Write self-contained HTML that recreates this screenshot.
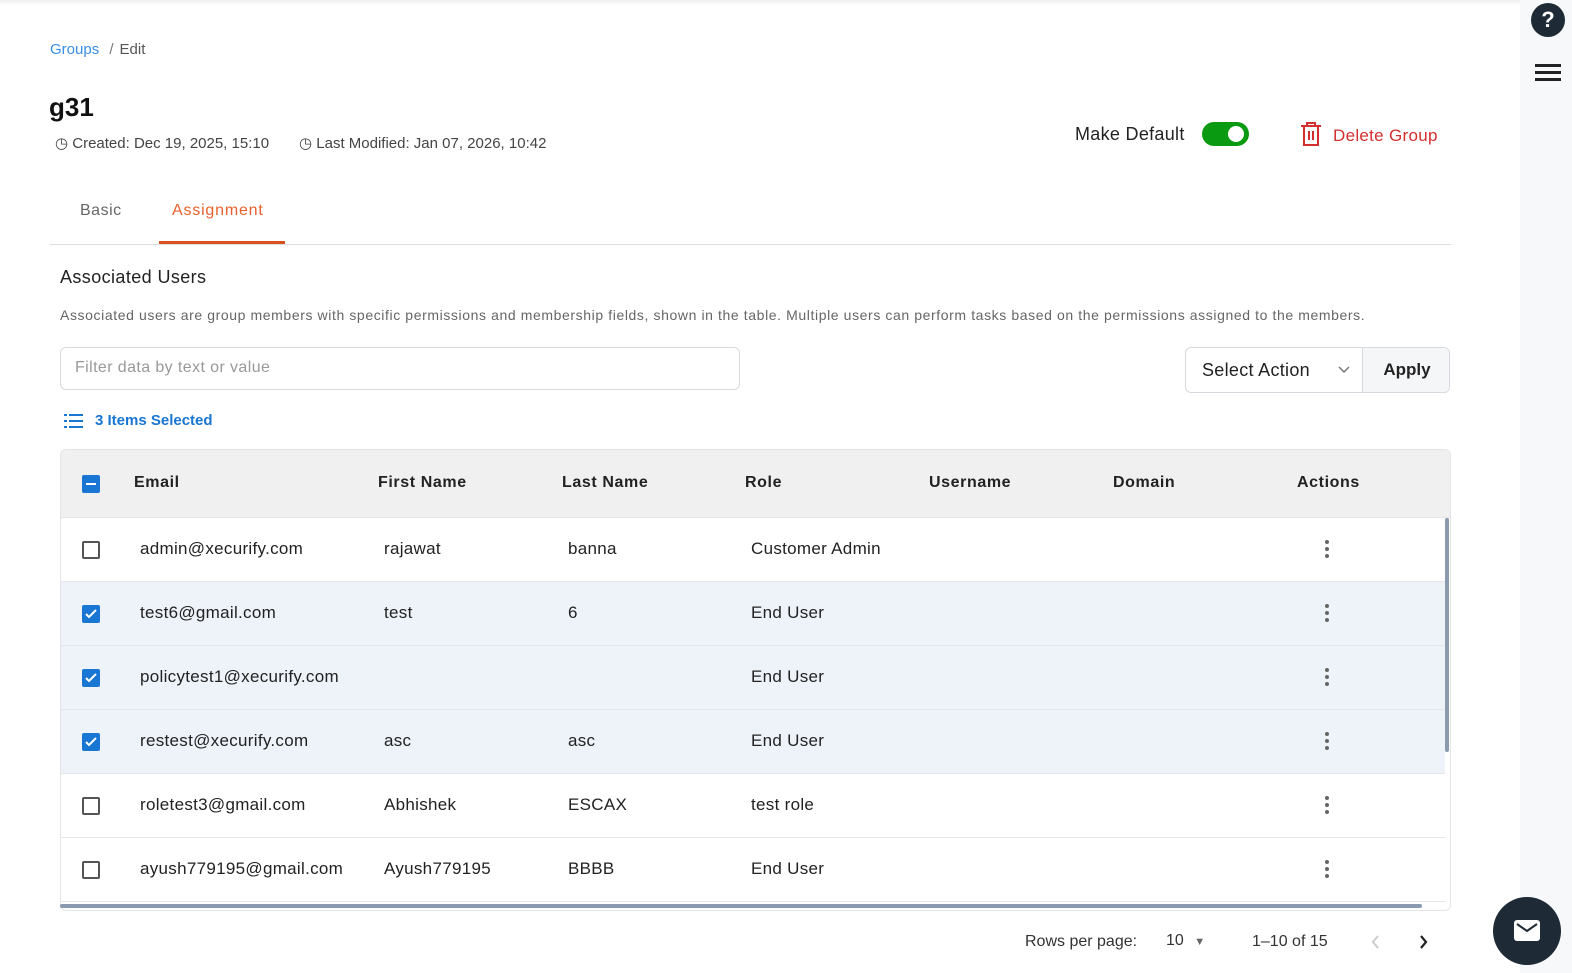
<!DOCTYPE html>
<html><head><meta charset="utf-8"><style>
*{box-sizing:border-box;margin:0;padding:0}
body{width:1572px;height:973px;overflow:hidden;background:#fff;font-family:"Liberation Sans",sans-serif;color:#222;position:relative}
.a{position:absolute;white-space:nowrap}
.side{position:absolute;left:1520px;top:0;width:52px;height:973px;background:#f7f8fa}
.row{position:absolute;left:61px;width:1384px;height:64px;border-bottom:1px solid #e4e6ea}
.sel{background:#edf3f9}
.cb{position:absolute;left:21px;top:23px;width:18px;height:18px;border:2px solid #555;border-radius:2px;background:#fff}
.cb.on{background:#1976d2;border-color:#1976d2}
.cell{position:absolute;top:21px;font-size:17px;letter-spacing:0.3px;color:#222}
.dots{position:absolute;left:1264px;top:22px;width:4px}
.dots i{display:block;width:4px;height:4px;border-radius:2px;background:#666;margin-bottom:3px}
.th{position:absolute;top:24px;font-size:16px;font-weight:bold;letter-spacing:0.6px;color:#222}
</style></head><body>
<div class="a" style="left:0;top:0;width:1520px;height:6px;background:linear-gradient(#f0f0f0,#fff)"></div>
<div class="side"></div>
<div class="a" style="left:1531px;top:3px;width:34px;height:34px;border-radius:17px;background:#1e2a35;color:#fff;font-weight:bold;font-size:22px;text-align:center;line-height:34px">?</div>
<div class="a" style="left:1535px;top:64px;width:26px;height:3px;background:#222"></div>
<div class="a" style="left:1535px;top:71px;width:26px;height:3px;background:#222"></div>
<div class="a" style="left:1535px;top:78px;width:26px;height:3px;background:#222"></div>

<div class="a" style="left:50px;top:41px;font-size:15px;color:#3a8ee6">Groups <span style="color:#777;margin:0 6px">/</span><span style="color:#555">Edit</span></div>
<div class="a" style="left:49px;top:92px;font-size:26px;font-weight:bold;color:#111">g31</div>
<div class="a" style="left:55px;top:134px;font-size:15px;color:#444">◷ Created: Dec 19, 2025, 15:10</div>
<div class="a" style="left:299px;top:134px;font-size:15px;color:#444">◷ Last Modified: Jan 07, 2026, 10:42</div>

<div class="a" style="left:1075px;top:124px;font-size:18px;letter-spacing:0.3px;color:#222">Make Default</div>
<div class="a" style="left:1202px;top:122px;width:47px;height:24px;border-radius:12px;background:#0a9a12"><div style="position:absolute;left:26px;top:4px;width:16px;height:16px;border-radius:8px;background:#fff"></div></div>
<svg class="a" style="left:1300px;top:122px" width="22" height="24" viewBox="0 0 22 24" fill="none" stroke="#d32f2f" stroke-width="2"><path d="M1 4h20M7 4V1h8v3M4 4v19h14V4M9 9v9M13 9v9"/></svg>
<div class="a" style="left:1333px;top:126px;font-size:17px;letter-spacing:0.3px;color:#d32f2f">Delete Group</div>

<div class="a" style="left:80px;top:202px;font-size:16px;letter-spacing:0.5px;color:#666">Basic</div>
<div class="a" style="left:172px;top:202px;font-size:16px;letter-spacing:0.8px;color:#e8612c">Assignment</div>
<div class="a" style="left:50px;top:244px;width:1401px;height:1px;background:#ddd"></div>
<div class="a" style="left:159px;top:241px;width:126px;height:3px;background:#d9531e"></div>

<div class="a" style="left:60px;top:267px;font-size:18px;letter-spacing:0.4px;color:#222">Associated Users</div>
<div class="a" style="left:60px;top:307px;font-size:14px;letter-spacing:0.6px;color:#666">Associated users are group members with specific permissions and membership fields, shown in the table. Multiple users can perform tasks based on the permissions assigned to the members.</div>

<div class="a" style="left:60px;top:347px;width:680px;height:43px;border:1px solid #d6d9de;border-radius:6px;padding:11px 14px;font-size:16px;letter-spacing:0.4px;color:#999">Filter data by text or value</div>
<div class="a" style="left:1185px;top:347px;width:265px;height:46px;border:1px solid #d6d9de;border-radius:6px;overflow:hidden">
<div style="position:absolute;left:0;top:0;width:176px;height:44px;padding:12px 16px;font-size:18px;letter-spacing:0.3px;color:#222">Select Action <svg style="position:absolute;left:152px;top:18px" width="12" height="8" viewBox="0 0 12 8"><path d="M1 1l5 5 5-5" stroke="#777" stroke-width="1.5" fill="none"/></svg></div>
<div style="position:absolute;left:176px;top:0;width:89px;height:44px;background:#f5f6f8;border-left:1px solid #d6d9de;text-align:center;line-height:44px;font-size:17px;font-weight:bold">Apply</div></div>

<svg class="a" style="left:64px;top:413px" width="20" height="16" viewBox="0 0 20 16" fill="#1976d2"><rect x="0" y="1" width="3" height="2"/><rect x="5" y="1" width="14" height="2"/><rect x="0" y="7" width="3" height="2"/><rect x="5" y="7" width="14" height="2"/><rect x="0" y="13" width="3" height="2"/><rect x="5" y="13" width="14" height="2"/></svg>
<div class="a" style="left:95px;top:412px;font-size:15px;font-weight:bold;color:#1976d2">3 Items Selected</div>

<div class="a" style="left:60px;top:449px;width:1391px;height:462px;border:1px solid #e2e4e8;border-radius:6px;overflow:hidden">
<div style="position:absolute;left:0;top:0;width:1391px;height:68px;background:#f0f0f0;border-bottom:1px solid #e2e4e8">
<div class="cb on" style="top:25px;left:21px"><div style="position:absolute;left:2px;top:6px;width:10px;height:2px;background:#fff"></div></div>
<div class="th" style="left:73px">Email</div><div class="th" style="left:317px">First Name</div><div class="th" style="left:501px">Last Name</div><div class="th" style="left:684px">Role</div><div class="th" style="left:868px">Username</div><div class="th" style="left:1052px">Domain</div><div class="th" style="left:1236px">Actions</div>
</div>
</div>
<div class="a" style="left:1445px;top:518px;width:4px;height:234px;background:#8a9bb0;border-radius:2px"></div>
<div class="a" style="left:60px;top:904px;width:1362px;height:4px;background:#8a9bb0;border-radius:2px"></div>

<div class="row" style="top:518px"><div class="cb"></div><div class="cell" style="left:79px">admin@xecurify.com</div><div class="cell" style="left:323px">rajawat</div><div class="cell" style="left:507px">banna</div><div class="cell" style="left:690px">Customer Admin</div><div class="dots"><i></i><i></i><i></i></div></div>
<div class="row sel" style="top:582px"><div class="cb on"><svg width="14" height="14" viewBox="0 0 14 14" style="position:absolute;left:0;top:0"><path d="M2 7l3 3 7-7" stroke="#fff" stroke-width="2" fill="none"/></svg></div><div class="cell" style="left:79px">test6@gmail.com</div><div class="cell" style="left:323px">test</div><div class="cell" style="left:507px">6</div><div class="cell" style="left:690px">End User</div><div class="dots"><i></i><i></i><i></i></div></div>
<div class="row sel" style="top:646px"><div class="cb on"><svg width="14" height="14" viewBox="0 0 14 14" style="position:absolute;left:0;top:0"><path d="M2 7l3 3 7-7" stroke="#fff" stroke-width="2" fill="none"/></svg></div><div class="cell" style="left:79px">policytest1@xecurify.com</div><div class="cell" style="left:690px">End User</div><div class="dots"><i></i><i></i><i></i></div></div>
<div class="row sel" style="top:710px"><div class="cb on"><svg width="14" height="14" viewBox="0 0 14 14" style="position:absolute;left:0;top:0"><path d="M2 7l3 3 7-7" stroke="#fff" stroke-width="2" fill="none"/></svg></div><div class="cell" style="left:79px">restest@xecurify.com</div><div class="cell" style="left:323px">asc</div><div class="cell" style="left:507px">asc</div><div class="cell" style="left:690px">End User</div><div class="dots"><i></i><i></i><i></i></div></div>
<div class="row" style="top:774px"><div class="cb"></div><div class="cell" style="left:79px">roletest3@gmail.com</div><div class="cell" style="left:323px">Abhishek</div><div class="cell" style="left:507px">ESCAX</div><div class="cell" style="left:690px">test role</div><div class="dots"><i></i><i></i><i></i></div></div>
<div class="row" style="top:838px"><div class="cb"></div><div class="cell" style="left:79px">ayush779195@gmail.com</div><div class="cell" style="left:323px">Ayush779195</div><div class="cell" style="left:507px">BBBB</div><div class="cell" style="left:690px">End User</div><div class="dots"><i></i><i></i><i></i></div></div>

<div class="a" style="left:1025px;top:933px;font-size:16px;color:#333">Rows per page:</div>
<div class="a" style="left:1166px;top:932px;font-size:16px;color:#333">10 <span style="font-size:11px;color:#666;margin-left:6px">▼</span></div>
<div class="a" style="left:1252px;top:933px;font-size:16px;color:#333">1–10 of 15</div>
<svg class="a" style="left:1370px;top:934px" width="10" height="16" viewBox="0 0 10 16"><path d="M8 2L3 8l5 6" stroke="#ccc" stroke-width="2" fill="none"/></svg>
<svg class="a" style="left:1419px;top:934px" width="10" height="16" viewBox="0 0 10 16"><path d="M2 2l5 6-5 6" stroke="#222" stroke-width="2.2" fill="none"/></svg>
<div class="a" style="left:1493px;top:897px;width:68px;height:68px;border-radius:34px;background:#1e2a35"></div>
<svg class="a" style="left:1514px;top:920px" width="26" height="21" viewBox="0 0 26 21"><rect x="0" y="0" width="26" height="21" rx="3" fill="#fff"/><path d="M3 4l10 7 10-7" stroke="#1e2a35" stroke-width="2" fill="none"/></svg>
</body></html>
